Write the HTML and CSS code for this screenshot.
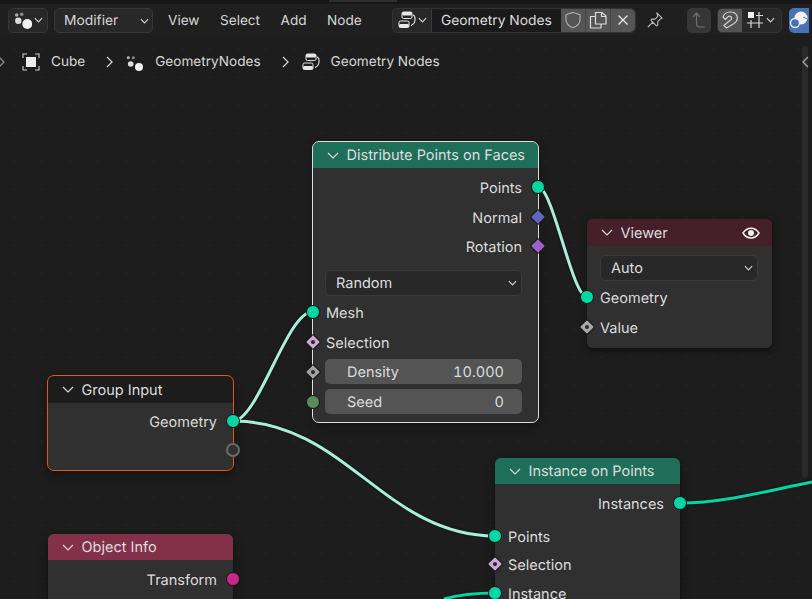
FILE: index.html
```html
<!DOCTYPE html>
<html lang="en">
<head>
<meta charset="utf-8">
<title>Geometry Nodes</title>
<link rel="stylesheet" href="styles.css">
</head>
<body>
<div class="app">
  <div class="topstrip"><div class="tabedge"></div></div>
  <header class="toolbar">
    <div class="btn editor">
      <svg class="ico18" viewBox="0 0 18 18"><circle cx="2.700" cy="4" r="1.800" fill="#a8a8a8"/><circle cx="7.700" cy="3.300" r="1.800" fill="#8c8c8c"/><circle cx="4.300" cy="9.700" r="3.200" fill="#dcdcdc"/><circle cx="13.300" cy="13" r="5" fill="#f0f0f0"/></svg>
      <svg class="chev" viewBox="0 0 10 6"><path d="M1 1l4 4 4-4"/></svg>
    </div>
    <div class="btn modifier"><span>Modifier</span><svg class="chev" viewBox="0 0 10 6"><path d="M1 1l4 4 4-4"/></svg></div>
    <nav class="menu"><span>View</span><span>Select</span><span>Add</span><span>Node</span></nav>
    <div class="idgroup">
      <div class="idtype">
        <svg class="ico18" viewBox="0 0 18 18"><rect x="4" y="1" width="10" height="6.500" rx="1.500" fill="none" stroke="#e8e8e8"/><rect x="4" y="1" width="10" height="3.500" rx="1.500" fill="#e8e8e8"/><rect x="1" y="10" width="10" height="6.500" rx="1.500" fill="none" stroke="#e8e8e8"/><rect x="1" y="13" width="10" height="3.500" rx="1.500" fill="#e8e8e8"/><path d="M15 4c3 1 3 9-2 10.500" fill="none" stroke="#e8e8e8" stroke-width="1.100"/></svg>
        <svg class="chev" viewBox="0 0 10 6"><path d="M1 1l4 4 4-4"/></svg>
      </div>
      <div class="idname">Geometry Nodes</div>
      <div class="idbtn"><svg class="ico18" viewBox="0 0 18 18"><path d="M9 1.500l7 2.200v5c0 4-3 6.500-7 8-4-1.500-7-4-7-8v-5z" fill="none" stroke="#a9a9a9" stroke-width="1.200"/></svg></div>
      <div class="idbtn"><svg class="ico18" viewBox="0 0 18 18"><path d="M6.500 13V1.500H13L17 5v8zM6 5.500H1.500V17H12v-4" fill="none" stroke="#dcdcdc" stroke-width="1.200"/><path d="M12.500 1.500V5.500H17" fill="none" stroke="#dcdcdc" stroke-width="1.200"/></svg></div>
      <div class="idbtn last"><svg class="ico12" viewBox="0 0 12 12"><path d="M1.500 1.500l9 9m0-9l-9 9" stroke="#e6e6e6" stroke-width="1.300"/></svg></div>
    </div>
    <svg class="pin" viewBox="0 0 20 20"><path d="M12 2l6 6-2 .8-3 3 .2 3.700-1.500 1L5.500 10.300l1-1.500 3.700.2 3-3zM7.500 12.500L2 18" fill="none" stroke="#bdbdbd" stroke-width="1.200" stroke-linejoin="round"/></svg>
    <div class="btn2 dim"><svg class="ico18" viewBox="0 0 18 18"><path d="M3 6l3.500-4L10 6M6.500 3v9c0 3 1 4 3 4H15" fill="none" stroke="#6f6f6f" stroke-width="1.200"/></svg></div>
    <div class="snapgroup">
      <div class="snapmag"><svg class="ico18" viewBox="0 0 18 18"><path d="M5.500 17L3 14.500l7-6c1.800-2-1-4.500-3-2.800L4.500 8.500 2 6C4-.500 14-.500 16 5c1 3-1 6-3 7.500z" fill="none" stroke="#cfcfcf" stroke-width="1.200" stroke-linejoin="round"/></svg></div>
      <div class="snapgrid">
        <svg class="ico18" viewBox="0 0 18 18"><rect x="2" y="1" width="6" height="6" fill="#f0f0f0"/><path d="M13 1v16M5 9v8M1 12h16M10 4.500h7" stroke="#d8d8d8" stroke-width="1.200" fill="none"/></svg>
        <svg class="chev" viewBox="0 0 10 6"><path d="M1 1l4 4 4-4"/></svg>
      </div>
    </div>
    <div class="overlay"><svg class="ico20" viewBox="0 0 20 20"><circle cx="12" cy="8" r="6.500" fill="#f2f2f2"/><path d="M14 7l4 2" stroke="#4772b3" stroke-width="1"/><circle cx="6" cy="13" r="4.500" fill="#4772b3" stroke="#f2f2f2" stroke-width="1.300"/></svg></div>
  </header>
  <main class="canvas">
    <div class="crumbs">
      <svg class="crumbsep first" viewBox="0 0 8 12"><path d="M1 1l5 5-5 5"/></svg>
      <svg class="ico18" viewBox="0 0 18 18"><path d="M1 5V1h4M13 1h4v4M17 13v4h-4M5 17H1v-4" fill="none" stroke="#cfcfcf" stroke-width="1.100"/><rect x="4" y="4" width="10" height="10" fill="#ececec"/></svg>
      <span class="crumb">Cube</span>
      <svg class="crumbsep" viewBox="0 0 8 12"><path d="M1 1l5 5-5 5"/></svg>
      <svg class="ico18" viewBox="0 0 18 18"><circle cx="2.300" cy="4.700" r="1.600" fill="#a8a8a8"/><circle cx="7.300" cy="4.700" r="1.500" fill="#8c8c8c"/><circle cx="4.700" cy="11" r="2.800" fill="#dcdcdc"/><circle cx="13" cy="14" r="4" fill="#f0f0f0"/></svg>
      <span class="crumb">GeometryNodes</span>
      <svg class="crumbsep" viewBox="0 0 8 12"><path d="M1 1l5 5-5 5"/></svg>
      <svg class="ico18" viewBox="0 0 18 18"><rect x="4" y="1" width="10" height="6.500" rx="1.500" fill="none" stroke="#e8e8e8"/><rect x="4" y="1" width="10" height="3.500" rx="1.500" fill="#e8e8e8"/><rect x="1" y="10" width="10" height="6.500" rx="1.500" fill="none" stroke="#e8e8e8"/><rect x="1" y="13" width="10" height="3.500" rx="1.500" fill="#e8e8e8"/><path d="M15 4c3 1 3 9-2 10.500" fill="none" stroke="#e8e8e8" stroke-width="1.100"/></svg>
      <span class="crumb">Geometry Nodes</span>
    </div>
    <div class="scrollthumb"></div>
    <svg class="sidearrow" viewBox="0 0 8 12"><path d="M6 1L1 6l5 5"/></svg>

    <section class="node selected dist">
      <div class="nhead green"><svg class="nchev" viewBox="0 0 12 8"><path d="M1 1l5 5 5-5"/></svg><span>Distribute Points on Faces</span></div>
      <div class="row out r1">Points<i class="sock circ teal"></i></div>
      <div class="row out r2">Normal<i class="sock dia blue"></i></div>
      <div class="row out r3">Rotation<i class="sock dia purple"></i></div>
      <div class="select s1"><span>Random</span><svg class="chev" viewBox="0 0 10 6"><path d="M1 1l4 4 4-4"/></svg></div>
      <div class="row in r4"><i class="sock circ teal"></i>Mesh</div>
      <div class="row in r5"><i class="sock dia lilac dot"></i>Selection</div>
      <div class="field f1"><i class="sock dia grey dot"></i><span>Density</span><span>10.000</span></div>
      <div class="field f2"><i class="sock circ dgreen"></i><span>Seed</span><span>0</span></div>
    </section>

    <section class="node viewer">
      <div class="nhead maroon"><svg class="nchev" viewBox="0 0 12 8"><path d="M1 1l5 5 5-5"/></svg><span>Viewer</span>
        <svg class="eye" viewBox="0 0 18 12"><path d="M1 6c4-6.500 12-6.500 16 0-4 6.500-12 6.500-16 0z" fill="none" stroke="#f0f0f0" stroke-width="1.500"/><circle cx="9" cy="6" r="3" fill="#f0f0f0"/></svg>
      </div>
      <div class="select s2"><span>Auto</span><svg class="chev" viewBox="0 0 10 6"><path d="M1 1l4 4 4-4"/></svg></div>
      <div class="row in vr1"><i class="sock circ teal"></i>Geometry</div>
      <div class="row in vr2"><i class="sock dia lgrey dot"></i>Value</div>
    </section>

    <section class="node active group">
      <div class="nhead black"><svg class="nchev" viewBox="0 0 12 8"><path d="M1 1l5 5 5-5"/></svg><span>Group Input</span></div>
      <div class="row out gr1">Geometry<i class="sock circ teal"></i></div>
      <div class="row out gr2"><i class="sock circ hollow"></i></div>
    </section>

    <section class="node objinfo">
      <div class="nhead crimson"><svg class="nchev" viewBox="0 0 12 8"><path d="M1 1l5 5 5-5"/></svg><span>Object Info</span></div>
      <div class="row out or1">Transform<i class="sock circ magenta"></i></div>
    </section>

    <section class="node inst">
      <div class="nhead green"><svg class="nchev" viewBox="0 0 12 8"><path d="M1 1l5 5 5-5"/></svg><span>Instance on Points</span></div>
      <div class="row out ir1">Instances<i class="sock circ teal"></i></div>
      <div class="row in ir2"><i class="sock circ teal"></i>Points</div>
      <div class="row in ir3"><i class="sock dia lilac dot"></i>Selection</div>
      <div class="row in ir4"><i class="sock circ teal"></i>Instance</div>
    </section>

    <svg class="wires" viewBox="0 0 812 599" width="812" height="599">
      <g class="w-light">
        <path d="M233 421C258 421 287 312 312 312"/>
        <path d="M233 421C345 421 385 536 495 536"/>
        <path d="M538 187C553 187 572 297 587 297"/>
      </g>
      <g class="w-teal">
        <path d="M680 503C725 503 770 490 812 482"/>
        <path d="M495 593C475 593 458 595 444 599"/>
      </g>
    </svg>
  </main>
</div>
</body>
</html>
```

FILE: styles.css
```css
* { box-sizing: border-box; }
html, body { margin: 0; height: 100%; background: #1d1d1d; }
body { font-family: Inter, "Noto Sans", "Liberation Sans", sans-serif; font-size: 14.500px; color: #dcdcdc; overflow: hidden; text-rendering: geometricPrecision; }
.app { width: 812px; height: 599px; display: flex; flex-direction: column; position: relative; overflow: hidden; }
.topstrip { height: 4px; background: #161616; flex: none; padding-left: 329px; }
.tabedge { width: 68px; height: 2px; background: #2e2e2e; }
.toolbar { height: 31px; flex: none; background: #1f1f1f; display: flex; align-items: center; padding: 1px 0 0 8px; font-size: 13.600px; }
svg { display: block; flex: none; }
.ico18 { width: 18px; height: 18px; }
.ico12 { width: 12px; height: 12px; }
.ico20 { width: 20px; height: 20px; }
.chev { width: 9px; height: 6px; fill: none; stroke: #d0d0d0; stroke-width: 1.300; }
.btn { height: 25px; border-radius: 5px; background: #282828; border: 1px solid #373737; display: flex; align-items: center; }
.editor { width: 40px; padding: 0 4px 0 5px; gap: 2px; margin-right: 6px; }
.modifier { width: 99px; padding: 1px 3px 0 9px; justify-content: space-between; color: #d6d6d6; margin-right: 6px; font-size: 13.800px; }
.menu { display: flex; gap: 20.500px; color: #d6d6d6; padding: 1px 0 0 9px; width: 233px; }
.idgroup { width: 244px; height: 25px; display: flex; border: 1px solid #333; border-radius: 5px; background: #282828; margin-right: 10px; }
.idtype { width: 39px; flex: none; display: flex; align-items: center; gap: 2px; padding-left: 5px; border-right: 1px solid #3a3a3a; }
.idname { width: 129px; flex: none; background: #1a1a1a; display: flex; align-items: center; padding: 1px 0 0 9px; color: #dedede; white-space: nowrap; font-size: 13.800px; }
.idbtn { width: 25px; flex: none; background: #555; display: flex; align-items: center; justify-content: center; border-right: 1px solid #454545; }
.idbtn.last { width: 24px; border-right: 0; border-radius: 0 5px 5px 0; }
.pin { width: 18px; height: 18px; margin-right: 23px; }
.btn2 { width: 24px; height: 25px; border-radius: 5px; display: flex; align-items: center; justify-content: center; margin-right: 6px; }
.dim { background: #363636; }
.snapgroup { width: 65px; height: 25px; display: flex; border-radius: 5px; background: #282828; border: 1px solid #333; margin-right: 7px; overflow: hidden; }
.snapmag { width: 24px; background: #545454; display: flex; align-items: center; justify-content: center; }
.snapgrid { flex: 1; display: flex; align-items: center; gap: 2px; padding-left: 4px; }
.overlay { width: 20px; height: 25px; background: #4772b3; border-radius: 5px 0 0 5px; display: flex; align-items: center; justify-content: center; flex: none; overflow: hidden; }

.canvas { flex: 1; position: relative; background-color: #1d1d1d; background-image: radial-gradient(circle, #232323 0.8px, transparent 1px); background-size: 28px 28px; }
.crumbs { display: flex; align-items: center; height: 20px; margin-top: 17px; color: #d8d8d8; padding-left: 22px; position: relative; font-size: 13.600px; }
.crumb { margin-left: 11px; margin-right: 21px; white-space: nowrap; }
.crumbsep { width: 8px; height: 12px; fill: none; stroke: #d0d0d0; stroke-width: 1.300; margin-right: 12px; }
.crumbsep.first { position: absolute; left: -2px; top: 4px; stroke: #8a8a8a; }
.scrollthumb { position: absolute; left: 802px; top: 11px; width: 6px; height: 432px; background: #2a2a2a; border-radius: 3px; }
.sidearrow { position: absolute; left: 802px; top: 21px; width: 8px; height: 12px; fill: none; stroke: #a8a8a8; stroke-width: 1.300; }

.node { position: absolute; background: #303030; border-radius: 6px; box-shadow: 0 3px 10px rgba(0,0,0,.45); color: #dcdcdc; }
.node.selected { outline: 1px solid #dedede; }
.node.active { outline: 1px solid #e2590f; }
.dist { left: 313px; top: 107px; width: 225px; height: 280px; }
.viewer { left: 587px; top: 184px; width: 185px; height: 129px; }
.group { left: 48px; top: 341px; width: 185px; height: 94px; }
.objinfo { left: 48px; top: 499px; width: 185px; height: 120px; }
.inst { left: 495px; top: 423px; width: 185px; height: 200px; }

.nhead { height: 26px; display: flex; align-items: center; border-radius: 6px 6px 0 0; padding: 1px 0 0 14px; gap: 7.500px; color: #dedede; white-space: nowrap; }
.green { background: #1f6e5a; }
.maroon { background: #45202a; height: 27px; }
.black { background: #1c1c1c; height: 27px; }
.crimson { background: #83314a; }
.nchev { width: 12px; height: 8px; fill: none; stroke: #d8d8d8; stroke-width: 1.200; }
.eye { width: 18px; height: 12px; margin-left: auto; margin-right: 12px; }

.row { position: absolute; left: 0; right: 0; height: 20px; padding-top: 2px; display: flex; align-items: center; white-space: nowrap; }
.row.out { justify-content: flex-end; padding-right: 16px; }
.row.in { padding-left: 13px; }
.r1 { top: 35px; } .r2 { top: 65px; } .r3 { top: 94px; }
.r4 { top: 160px; } .r5 { top: 190px; }
.vr1 { top: 68px; } .vr2 { top: 98px; }
.gr1 { top: 35px; } .gr2 { top: 64px; }
.or1 { top: 35px; }
.ir1 { top: 35px; } .ir2 { top: 68px; } .ir3 { top: 96px; } .ir4 { top: 125px; }

.sock { position: absolute; top: 50%; display: block; z-index: 3; }
.row.out .sock { right: 0; transform: translate(50%, -50%); }
.row.in .sock { left: 0; transform: translate(-50%, -50%); }
.circ { width: 14px; height: 14px; border-radius: 50%; border: 1px solid #141414; }
.dia { width: 10px; height: 10px; }
.row.out .dia, .row.in .dia { transform: translate(-50%, -50%) rotate(45deg); border-radius: 1px; outline: 1px solid #1a1a1a; }
.row.out .dia { right: auto; left: 100%; }
.teal { background: #00d6a3; }
.blue { background: #6363c7; }
.purple { background: #a15fc9; }
.lilac { background: #cca6d6; }
.grey { background: #a1a1a1; }
.lgrey { background: #a8a8a8; }
.dgreen { background: #598c5c; }
.magenta { background: #c7298a; }
.hollow { background: #303030; border: 2px solid #6a6a6a; }
.dot::after { content: ""; position: absolute; left: 3px; top: 3px; width: 4px; height: 4px; border-radius: 50%; background: #2a2a2a; }

.select { position: absolute; height: 26px; background: #282828; border: 1px solid #3a3a3a; border-radius: 5px; display: flex; align-items: center; justify-content: space-between; padding: 0 4px 0 10px; color: #dedede; }
.s1 { left: 12px; right: 16px; top: 128px; }
.s2 { left: 13px; right: 14px; top: 36px; height: 26px; }

.field { position: absolute; left: 12px; right: 16px; height: 25px; padding: 2px 18px 0 22px; background: #545454; border-radius: 5px; display: flex; align-items: center; justify-content: space-between; color: #dcdcdc; font-variant-numeric: tabular-nums; }
.f1 { top: 217px; } .f2 { top: 247px; }
.field .sock { left: -12px; top: 50%; }
.field .dia { transform: translate(-50%, -50%) rotate(45deg); border-radius: 1px; outline: 1px solid #1a1a1a; }
.field .circ { transform: translate(-50%, -50%); }

.wires { position: absolute; left: 0; top: -35px; z-index: 2; pointer-events: none; fill: none; overflow: visible; filter: drop-shadow(0 0 1px rgba(0,0,0,.6)); }
.w-light path { stroke: #a9eedb; stroke-width: 3; stroke-linecap: round; }
.w-teal path { stroke: #00d6a3; stroke-width: 3; }
```
